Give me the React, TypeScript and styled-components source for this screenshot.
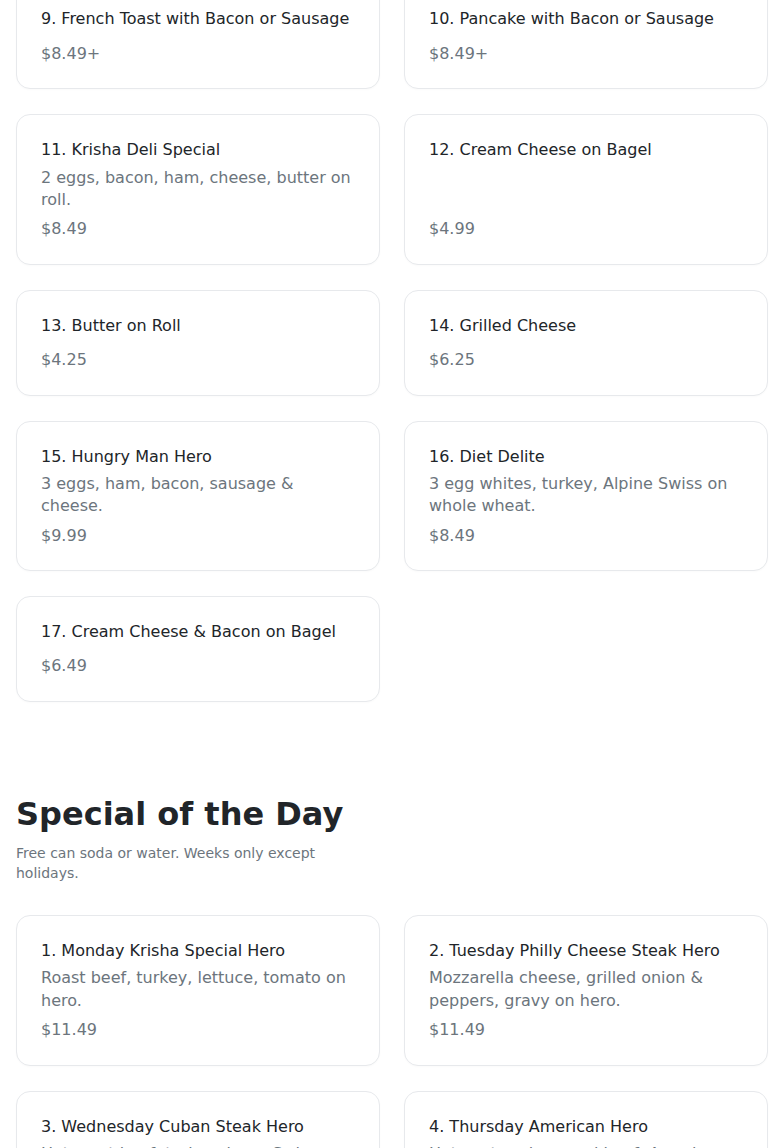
import React from 'react';
import styled, { createGlobalStyle } from 'styled-components';

const GlobalStyle = createGlobalStyle`
  body {
    margin: 0;
    background: #ffffff;
    font-family: "DejaVu Sans", "Noto Sans", sans-serif;
    color: #212529;
  }
`;

const Page = styled.main`
  padding: 0 16px;
  margin-top: -16.6px; /* page is scrolled a bit past the top of the menu */
`;

const Section = styled.section`
  & + & {
    margin-top: 93px;
  }
`;

const Heading = styled.h2`
  margin: 0 0 11px;
  font-size: 32px;
  line-height: 1.2;
  font-weight: 700;
  color: #212529;
`;

const Subtitle = styled.p`
  margin: 0 0 31.6px;
  max-width: 364px;
  font-size: 14px;
  line-height: 1.4;
  color: #6c757d;
`;

const Grid = styled.div`
  display: grid;
  grid-template-columns: 1fr 1fr;
  gap: 25px 24px;
`;

const Card = styled.article`
  display: flex;
  flex-direction: column;
  padding: 24px 24px 23px;
  background: #ffffff;
  border: 1px solid #e7e9ec;
  border-radius: 14px;
  box-shadow: 0 1px 2px rgba(0, 0, 0, 0.02);
`;

const Title = styled.h3`
  margin: 0 0 5px;
  font-size: 16px;
  line-height: 1.4;
  font-weight: 400;
  color: #212529;
`;

const Desc = styled.p`
  margin: 0;
  font-size: 16px;
  line-height: 1.4;
  color: #6c757d;
`;

const Price = styled.div`
  margin-top: auto;
  padding-top: 7px;
  font-size: 16px;
  line-height: 1.4;
  color: #6c757d;
`;

interface Item {
  name: string;
  desc?: string;
  price: string;
}

const breakfast: Item[] = [
  { name: '9. French Toast with Bacon or Sausage', price: '$8.49+' },
  { name: '10. Pancake with Bacon or Sausage', price: '$8.49+' },
  { name: '11. Krisha Deli Special', desc: '2 eggs, bacon, ham, cheese, butter on roll.', price: '$8.49' },
  { name: '12. Cream Cheese on Bagel', price: '$4.99' },
  { name: '13. Butter on Roll', price: '$4.25' },
  { name: '14. Grilled Cheese', price: '$6.25' },
  { name: '15. Hungry Man Hero', desc: '3 eggs, ham, bacon, sausage & cheese.', price: '$9.99' },
  { name: '16. Diet Delite', desc: '3 egg whites, turkey, Alpine Swiss on whole wheat.', price: '$8.49' },
  { name: '17. Cream Cheese & Bacon on Bagel', price: '$6.49' },
];

const specials: Item[] = [
  { name: '1. Monday Krisha Special Hero', desc: 'Roast beef, turkey, lettuce, tomato on hero.', price: '$11.49' },
  { name: '2. Tuesday Philly Cheese Steak Hero', desc: 'Mozzarella cheese, grilled onion & peppers, gravy on hero.', price: '$11.49' },
  { name: '3. Wednesday Cuban Steak Hero', desc: 'Hot roast beef, turkey, ham, Swiss cheese on hero.', price: '$11.49' },
  { name: '4. Thursday American Hero', desc: 'Hot pastrami, corned beef, American cheese on hero.', price: '$11.49' },
];

function MenuCard({ item }: { item: Item }) {
  return (
    <Card>
      <Title>{item.name}</Title>
      {item.desc && <Desc>{item.desc}</Desc>}
      <Price>{item.price}</Price>
    </Card>
  );
}

export default function App() {
  return (
    <>
      <GlobalStyle />
      <Page>
        <Section>
          <Grid>
            {breakfast.map((item) => (
              <MenuCard key={item.name} item={item} />
            ))}
          </Grid>
        </Section>
        <Section>
          <Heading>Special of the Day</Heading>
          <Subtitle>Free can soda or water. Weeks only except holidays.</Subtitle>
          <Grid>
            {specials.map((item) => (
              <MenuCard key={item.name} item={item} />
            ))}
          </Grid>
        </Section>
      </Page>
    </>
  );
}
